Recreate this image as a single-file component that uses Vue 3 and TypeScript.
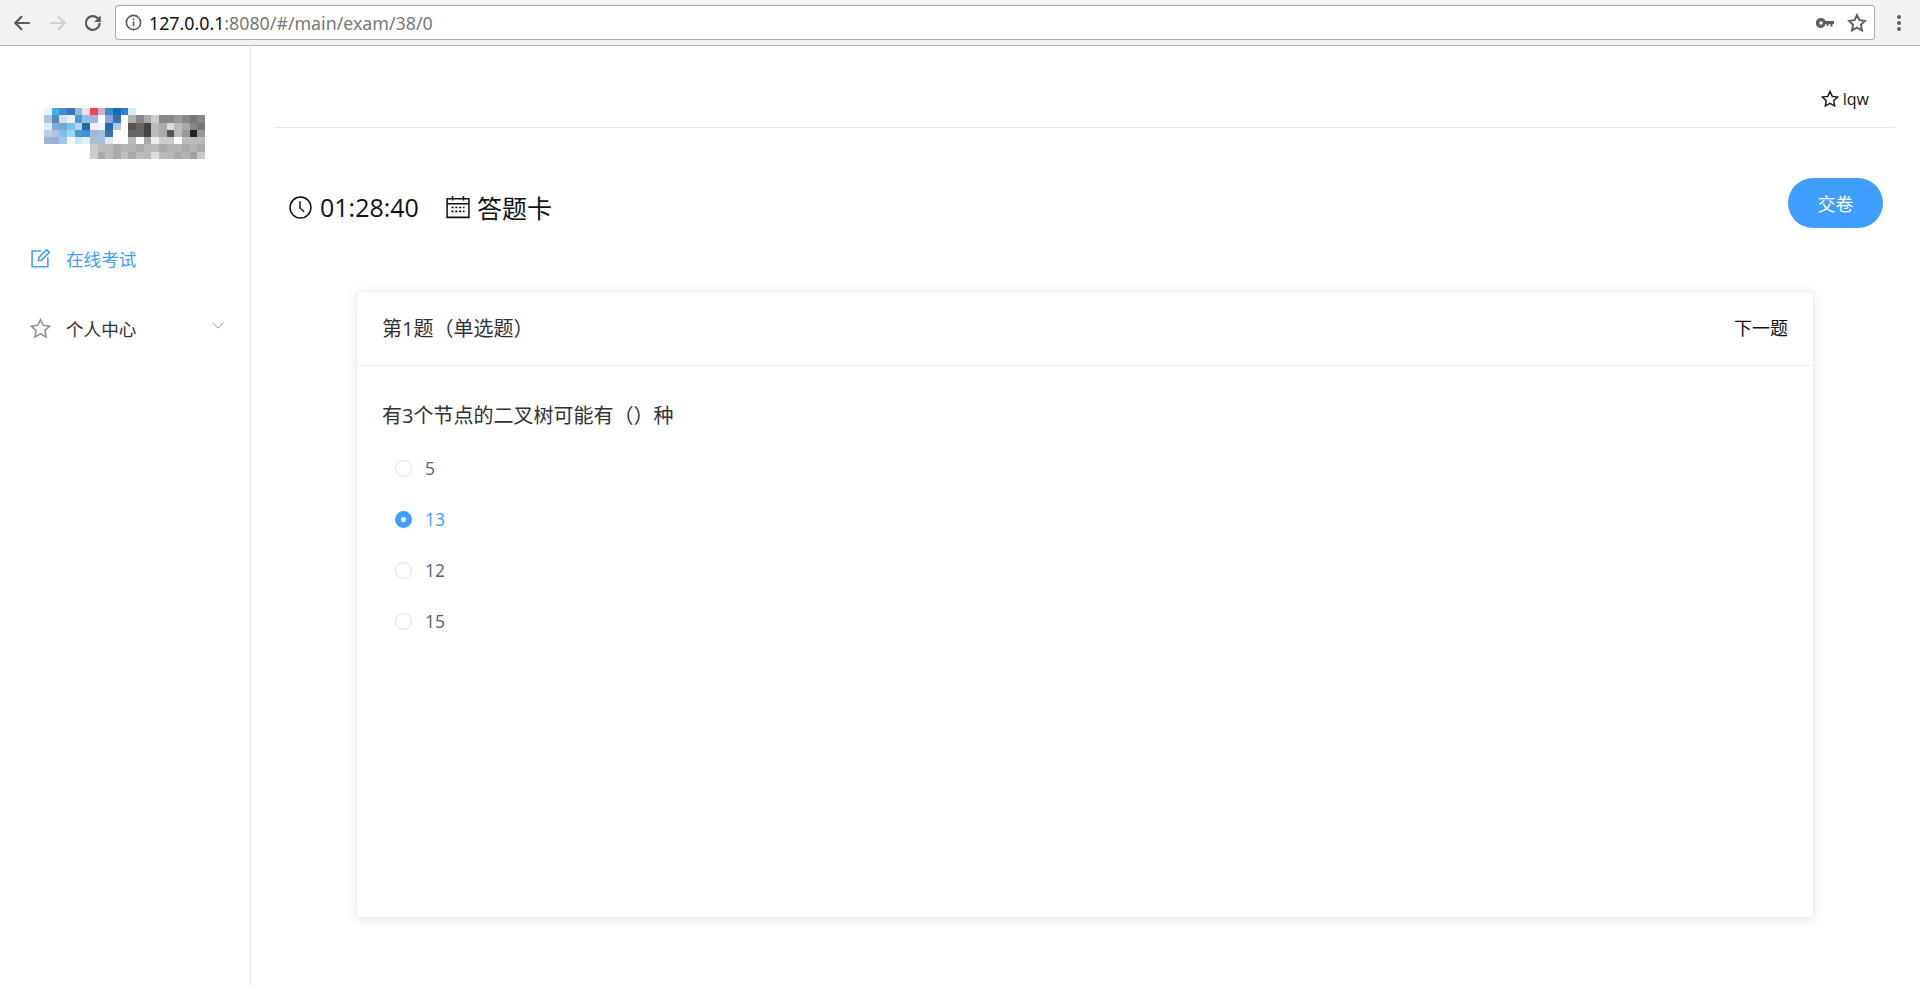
<template>
  <div class="page">
    <!-- browser toolbar -->
    <div class="toolbar">
      <svg class="tb-icon" viewBox="0 0 18 18" fill="none" stroke="#5a5a5a" stroke-width="2">
        <path d="M16 9H3M9 3 3 9l6 6" />
      </svg>
      <svg class="tb-icon" viewBox="0 0 18 18" fill="none" stroke="#cfcfcf" stroke-width="2">
        <path d="M2 9h13M9 3l6 6-6 6" />
      </svg>
      <svg class="tb-icon reload" viewBox="0 0 18 18" fill="none" stroke="#5a5a5a" stroke-width="2">
        <path d="M15 9a6.200 6.200 0 1 1-1.800-4.400L15.500 7" />
        <path d="M16 2v6h-6" fill="#5a5a5a" stroke="none" />
      </svg>
      <div class="address">
        <svg class="info" viewBox="0 0 16 16" fill="none" stroke="#5a5a5a" stroke-width="1.500">
          <circle cx="8" cy="8" r="6.700" />
          <path d="M8 7v4.600M8 4.200v1.700" />
        </svg>
        <span class="url"><b>127.0.0.1</b>:8080/#/main/exam/38/0</span>
        <svg class="key" viewBox="0 0 18 10" fill="#5f5f5f">
          <path d="M5 0a5 5 0 0 1 4.600 3H18v3h-1.500v2.500h-2.300V6h-1.400v1.800h-2.300V6h-.9A5 5 0 1 1 5 0Zm0 3.300a1.700 1.700 0 1 0 .1 3.400 1.700 1.700 0 0 0-.1-3.400Z" />
        </svg>
        <svg class="bookmark" viewBox="0 0 18 18" fill="none" stroke="#5f5f5f" stroke-width="1.700">
          <path d="M9 1.800l2.200 4.700 5 .6-3.700 3.500 1 5.100L9 13.200l-4.500 2.500 1-5.100L1.800 7.100l5-.6Z" />
        </svg>
      </div>
      <div class="more"><i></i><i></i><i></i></div>
    </div>

    <div class="body">
      <aside class="sidebar">
        <div class="logo">
          <div v-for="(row, r) in logoRows" :key="r" class="logo-row">
            <i v-for="(c, i) in row" :key="i" :style="{ background: c }"></i>
          </div>
        </div>
        <nav class="menu">
          <div class="menu-item active">
            <svg class="menu-icon" viewBox="0 0 20 20" fill="none" stroke="#409eff" stroke-width="1.500">
              <path d="M11 2.800H2v15h15V9" />
              <path d="m8 12 .4-3L15.800 1.600l2.600 2.600L11 11.600Z" />
            </svg>
            <span>在线考试</span>
          </div>
          <div class="menu-item">
            <svg class="menu-icon" viewBox="0 0 20 20" fill="none" stroke="#909399" stroke-width="1.500">
              <path d="m10 1.500 2.600 5.500 6 .8-4.400 4.200 1.100 6L10 15l-5.300 3 1.100-6L1.400 7.800l6-.8Z" />
            </svg>
            <span>个人中心</span>
            <svg class="chevron" viewBox="0 0 12 7" fill="none" stroke="#909399" stroke-width="1">
              <path d="m.6.800 5.400 5.400L11.400.800" />
            </svg>
          </div>
        </nav>
      </aside>

      <main class="main">
        <header class="top">
          <svg class="user-star" viewBox="0 0 16 16" fill="none" stroke="#111" stroke-width="1.200">
            <path d="m8 1.200 2 4.400 4.800.6-3.500 3.300.9 4.700L8 11.900l-4.200 2.300.9-4.700L1.200 6.200 6 5.600Z" />
          </svg>
          <span>lqw</span>
        </header>

        <div class="exam-bar">
          <div class="exam-info">
            <svg class="bar-icon clock" viewBox="0 0 22 22" fill="none" stroke="#111" stroke-width="1.400">
              <circle cx="11" cy="11" r="10" />
              <path d="M10.500 5v6.500l4 3.500" />
            </svg>
            <span class="time">01:28:40</span>
            <svg class="bar-icon cal" viewBox="0 0 22 22" fill="none" stroke="#111" stroke-width="1.400">
              <path d="M1 3.500h20v17H1ZM1 8h20M6 1v4M16 1v4" />
              <path d="M5 11.500h12M5 15h12" stroke-dasharray="2 1.500" />
            </svg>
            <span>答题卡</span>
          </div>
          <button class="submit">交卷</button>
        </div>

        <section class="card">
          <div class="card-head">
            <span class="title">第1题（单选题）</span>
            <span class="next">下一题</span>
          </div>
          <div class="card-body">
            <p class="question">有3个节点的二叉树可能有（）种</p>
            <label v-for="opt in options" :key="opt" class="option" :class="{ checked: opt === selected }">
              <span class="radio"></span>
              <span>{{ opt }}</span>
            </label>
          </div>
        </section>
      </main>
    </div>
  </div>
</template>

<script setup lang="ts">
const options: string[] = ['5', '13', '12', '15']
const selected = '13'

// the logo is blurred to a mosaic in the screenshot
const logoRows: string[][] = [
  ['#e8f5fb', '#3fb0e0', '#3f8fd0', '#3f73b5', '#8abde0', '#fde0e0', '#f04050', '#c8b4c8', '#3b8bd0', '#1a6cb8', '#2f80c8', '#d8ecf8', '#fff', '#fff', '#fff', '#fff', '#fff', '#fff', '#fff', '#fff', '#fff'],
  ['#b0c6e0', '#5c88c0', '#d0e0f0', '#e8f0f8', '#5098d0', '#90c0e0', '#a0b8d8', '#fff', '#88a8d8', '#3870b0', '#fff', '#b0b0b0', '#888', '#aaa', '#ccc', '#888', '#888', '#999', '#888', '#777', '#888'],
  ['#e0eaf4', '#80a8d8', '#70a8d8', '#78c0e8', '#b8d4ec', '#2068b0', '#e8f0f8', '#f0f4f8', '#2068b0', '#b0c8e0', '#fff', '#555', '#666', '#444', '#bbb', '#aaa', '#ddd', '#bbb', '#aaa', '#888', '#777'],
  ['#c0cce0', '#b0c4e0', '#80c0e8', '#98d8f4', '#4898d8', '#4090d0', '#a0b8d8', '#98c0e0', '#4070a8', '#fff', '#fff', '#666', '#666', '#444', '#bbb', '#aaa', '#555', '#bbb', '#999', '#222', '#999'],
  ['#a0b4d4', '#98b0d4', '#a0c8e8', '#f0f8fc', '#c8e8f8', '#e0f0f8', '#a8bcd8', '#a8c0dc', '#dfe6f0', '#fff', '#fff', '#bbb', '#fff', '#aaa', '#eee', '#ccc', '#ccc', '#fff', '#bbb', '#bbb', '#bbb'],
  ['#fff', '#fff', '#fff', '#fff', '#fff', '#fff', '#ccc', '#bbb', '#bbb', '#aaa', '#b4b4b4', '#b4b4b4', '#aaa', '#b8b8b8', '#bbb', '#aaa', '#b4b4b4', '#b4b4b4', '#aaa', '#b4b4b4', '#a8a8a8'],
  ['#fff', '#fff', '#fff', '#fff', '#fff', '#fff', '#ccc', '#aaa', '#bbb', '#aaa', '#c0c0c0', '#aaa', '#bbb', '#b8b8b8', '#ddd', '#bbb', '#b8b8b8', '#aaa', '#b4b4b4', '#a0a0a0', '#c8c8c8'],
]
</script>

<style>
html,
body {
  margin: 0;
  background: #fff;
}
</style>

<style scoped>
.page {
  height: 986px;
  display: flex;
  flex-direction: column;
  overflow: hidden;
  font-family: "Open Sans", "Noto Sans CJK SC", sans-serif;
  color: #303133;
}

.toolbar {
  height: 45px;
  flex: none;
  display: flex;
  align-items: center;
  padding: 0 11px 0 12px;
  gap: 16px;
  background: #f2f2f2;
  border-bottom: 1px solid #b5b5b5;
}

.tb-icon {
  width: 20px;
  height: 20px;
  flex: none;
}

.reload {
  margin-left: -1px;
}

.address {
  flex: 1;
  height: 33px;
  margin-left: -4px;
  display: flex;
  align-items: center;
  padding: 0 7px 0 9px;
  background: #fff;
  border: 1px solid #a9a9a9;
  border-radius: 3px;
}

.info {
  width: 17px;
  height: 17px;
  margin-right: 7px;
}

.url {
  flex: 1;
  font-family: "Noto Sans", sans-serif;
  font-size: 17.800px;
  color: #777;
}

.url b {
  font-weight: 400;
  color: #111;
}

.key {
  width: 18px;
  height: 10px;
  margin-right: 13px;
}

.bookmark {
  width: 20px;
  height: 20px;
}

.more {
  width: 20px;
  display: flex;
  flex-direction: column;
  align-items: center;
  gap: 2px;
  margin-left: -2px;
}

.more i {
  width: 4px;
  height: 4px;
  border-radius: 50%;
  background: #5f5f5f;
}

.body {
  flex: 1;
  display: flex;
  min-height: 0;
}

.sidebar {
  width: 250px;
  flex: none;
  border-right: 1px solid #e6e6e6;
}

.logo {
  margin: 62px 0 0 44px;
  width: 161px;
}

.logo-row {
  display: flex;
  height: 7.3px;
}

.logo-row i {
  flex: 1;
}

.menu {
  margin-top: 64px;
}

.menu-item {
  height: 70px;
  display: flex;
  align-items: center;
  padding-left: 30px;
  font-size: 17.6px;
  position: relative;
}

.menu-item.active {
  color: #409eff;
}

.menu-icon {
  width: 21px;
  height: 21px;
  margin-right: 15px;
  flex: none;
}

.chevron {
  width: 12px;
  height: 7px;
  position: absolute;
  left: 212px;
  top: 29px;
}

.main {
  flex: 1;
  min-width: 0;
  padding: 0 25px 0 24px;
}

.top {
  height: 82px;
  display: flex;
  align-items: flex-end;
  justify-content: flex-end;
  gap: 4px;
  padding: 0 26px 16px 0;
  box-sizing: border-box;
  border-bottom: 1px solid #e6e6e6;
  font-size: 16px;
  line-height: 24px;
  color: #111;
}

.user-star {
  width: 18px;
  height: 18px;
  margin-bottom: 3px;
}

.exam-bar {
  display: flex;
  justify-content: space-between;
  align-items: flex-start;
  height: 163px;
  padding: 50px 12px 0 14px;
  box-sizing: border-box;
}

.exam-info {
  display: flex;
  align-items: center;
  height: 58px;
  font-size: 25px;
  color: #111;
}

.bar-icon {
  width: 24px;
  height: 24px;
  flex: none;
}

.clock {
  width: 23px;
  height: 23px;
  margin-right: 8px;
}

.cal {
  margin-right: 7px;
}

.time {
  margin-right: 27px;
}

.submit {
  width: 95px;
  height: 50px;
  border: 0;
  border-radius: 25px;
  background: #409eff;
  color: #fff;
  font: inherit;
  font-size: 18px;
  padding: 0;
}

.card {
  width: 1458px;
  height: 627px;
  margin-left: 81px;
  box-sizing: border-box;
  background: #fff;
  border: 1px solid #ebeef5;
  border-radius: 5px;
  box-shadow: 0 2px 12px rgba(0, 0, 0, 0.1);
}

.card-head {
  height: 74px;
  box-sizing: border-box;
  display: flex;
  justify-content: space-between;
  align-items: center;
  padding: 0 25px;
  border-bottom: 1px solid #ebeef5;
  font-size: 18px;
}

.title {
  font-size: 20px;
  margin-bottom: 2px;
}

.next {
  color: #111;
  margin-bottom: 4px;
}

.card-body {
  padding: 38px 25px 0;
}

.question {
  margin: 0;
  font-size: 20px;
  line-height: 24px;
}

.option {
  display: flex;
  align-items: center;
  height: 51px;
  padding-left: 13px;
  font-size: 17.5px;
  color: #606266;
}

.option:first-of-type {
  margin-top: 14px;
}

.option.checked {
  color: #409eff;
}

.radio {
  width: 17px;
  height: 17px;
  box-sizing: border-box;
  margin: 2px 13px 0 0;
  border: 1px solid #dcdfe6;
  border-radius: 50%;
  background: #fff;
}

.checked .radio {
  border: 6px solid #409eff;
}
</style>
